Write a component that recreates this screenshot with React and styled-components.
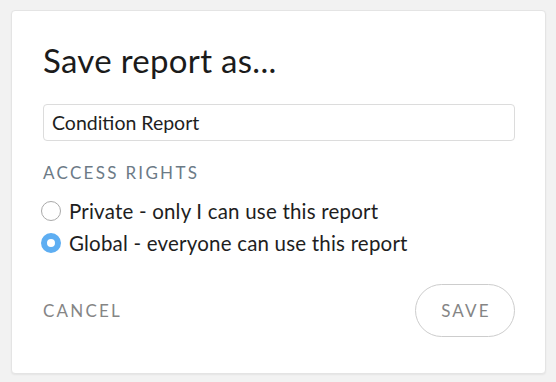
import React, { useState } from "react";
import styled, { createGlobalStyle } from "styled-components";

const Global = createGlobalStyle`
  html, body { margin: 0; padding: 0; }
  body {
    background: #f2f2f2;
    font-family: "Lato", "Open Sans", sans-serif;
    width: 556px;
    height: 382px;
    overflow: hidden;
  }
`;

const Page = styled.div`
  padding: 10px 10px 8px 11px;
`;

const Dialog = styled.div`
  box-sizing: border-box;
  width: 535px;
  height: 364px;
  background: #fff;
  border-radius: 4px;
  border: 1px solid #e4e4e4;
  box-shadow: 0 1px 2px rgba(0,0,0,0.06);
  padding: 31px 30px 0 31px;
  display: flex;
  flex-direction: column;
`;

const Title = styled.h1`
  margin: 0;
  font-size: 33px;
  line-height: 36px;
  letter-spacing: 0.3px;
  font-weight: 400;
  color: #1b1b1b;
`;

const Input = styled.input`
  box-sizing: border-box;
  margin-top: 26px;
  width: 472px;
  height: 37px;
  border: 1px solid #dcdcdc;
  border-radius: 4px;
  padding: 0 8px;
  font-family: inherit;
  font-size: 19.5px;
  color: #1e1e1e;
  outline: none;
`;

const SectionLabel = styled.div`
  margin-top: 22px;
  font-size: 17px;
  line-height: 20px;
  letter-spacing: 2.3px;
  color: #6c7a86;
`;

const Options = styled.div`
  margin-top: 12px;
  display: flex;
  flex-direction: column;
`;

const Option = styled.label`
  display: flex;
  align-items: center;
  height: 32px;
  gap: 8px;
  font-size: 20.5px;
  letter-spacing: 0.2px;
  color: #1e1e1e;
  cursor: pointer;
  margin-left: -2px;
`;

const Radio = styled.span`
  box-sizing: border-box;
  width: 20px;
  height: 20px;
  border-radius: 50%;
  flex: none;
  border: ${(p) => (p.$checked ? "6.5px solid #5eaef2" : "1.5px solid #a9a9a9")};
  background: #fff;
`;

const Footer = styled.div`
  margin-top: 25px;
  display: flex;
  align-items: center;
  justify-content: space-between;
`;

const TextButton = styled.button`
  border: none;
  background: none;
  padding: 0;
  font-family: inherit;
  font-size: 17px;
  letter-spacing: 2.2px;
  color: #858585;
  cursor: pointer;
`;

const PillButton = styled.button`
  box-sizing: border-box;
  width: 100px;
  height: 53px;
  border-radius: 27px;
  border: 1.5px solid #cdcdcd;
  background: #fff;
  font-family: inherit;
  font-size: 17px;
  letter-spacing: 2.2px;
  padding: 0 0 0 2px;
  color: #858585;
  cursor: pointer;
`;

export default function App() {
  const [access, setAccess] = useState("global");
  const options = [
    { id: "private", label: "Private - only I can use this report" },
    { id: "global", label: "Global - everyone can use this report" },
  ];
  return (
    <Page>
      <Global />
      <Dialog>
        <Title>Save report as...</Title>
        <Input defaultValue="Condition Report" />
        <SectionLabel>ACCESS RIGHTS</SectionLabel>
        <Options>
          {options.map((o) => (
            <Option key={o.id} onClick={() => setAccess(o.id)}>
              <Radio $checked={access === o.id} />
              {o.label}
            </Option>
          ))}
        </Options>
        <Footer>
          <TextButton>CANCEL</TextButton>
          <PillButton>SAVE</PillButton>
        </Footer>
      </Dialog>
    </Page>
  );
}
